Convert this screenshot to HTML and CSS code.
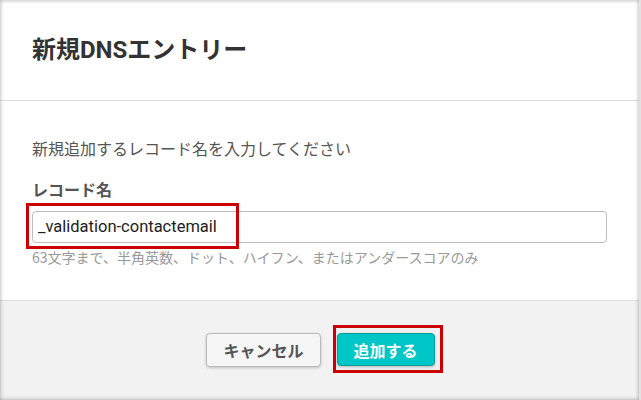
FILE: index.html
```html
<!DOCTYPE html>
<html lang="ja">
<head>
<meta charset="utf-8">
<link rel="stylesheet" href="styles.css">
</head>
<body>
<div class="modal">
  <header class="modal-header">
    <h1 class="modal-title">新規DNSエントリー</h1>
  </header>
  <section class="modal-body">
    <p class="intro">新規追加するレコード名を入力してください</p>
    <label class="field-label">レコード名</label>
    <div class="field">
      <div class="input">_validation-contactemail</div>
      <span class="mark mark-input"></span>
    </div>
    <p class="help">63文字まで、半角英数、ドット、ハイフン、またはアンダースコアのみ</p>
  </section>
  <footer class="modal-footer">
    <button class="btn btn-cancel">キャンセル</button>
    <span class="btn-wrap">
      <button class="btn btn-primary">追加する</button>
      <span class="mark mark-btn"></span>
    </span>
  </footer>
</div>
</body>
</html>
```

FILE: styles.css
```css
* { box-sizing: border-box; }
html, body {
  margin: 0;
  padding: 0;
  background: #fff;
}
body {
  font-family: "Noto Sans CJK JP", "Noto Sans", sans-serif;
  width: 641px;
  height: 400px;
  overflow: hidden;
}
.modal {
  position: relative;
  width: 641px;
  height: 400px;
  display: flex;
  flex-direction: column;
  background: #fff;
}
.modal::after {
  content: "";
  position: absolute;
  inset: 0;
  pointer-events: none;
  box-shadow: inset 0 0 4px rgba(0, 0, 0, 0.35);
  border-right: 2px solid #e2e2e2;
}
.modal-header {
  height: 101px;
  border-bottom: 1px solid #dedede;
  display: flex;
  align-items: center;
  padding: 0 32px;
}
.modal-title {
  margin: 0;
  font-family: Roboto, "Noto Sans CJK JP", sans-serif;
  font-size: 24px;
  font-weight: 700;
  color: #333;
  line-height: 32px;
}
.modal-body {
  flex: 1;
  padding: 35px 34px 0 32px;
}
.intro {
  margin: 0;
  font-size: 16px;
  line-height: 24px;
  color: #555;
}
.field-label {
  display: block;
  margin-top: 17px;
  font-size: 16px;
  line-height: 24px;
  font-weight: 700;
  color: #555;
}
.field {
  position: relative;
  margin-top: 10px;
}
.input {
  height: 32px;
  border: 1px solid #bdbdbd;
  border-radius: 4px;
  padding: 0 5px;
  font-family: Roboto, "Noto Sans CJK JP", sans-serif;
  font-size: 16.5px;
  line-height: 30px;
  color: #222;
  background: #fff;
}
.mark {
  position: absolute;
  border: 3px solid #cc0000;
  pointer-events: none;
}
.mark-input {
  left: -6px;
  top: -8px;
  width: 213px;
  height: 46px;
}
.help {
  margin: 5px 0 0;
  font-size: 14px;
  line-height: 18px;
  color: #999;
}
.modal-footer {
  height: 100px;
  background: #f2f2f2;
  border-top: 1px solid #dedede;
  display: flex;
  align-items: center;
  justify-content: center;
  gap: 16px;
  padding-bottom: 2px;
}
.btn {
  font-family: inherit;
  font-size: 16px;
  font-weight: 700;
  height: 34px;
  line-height: 32px;
  border-radius: 4px;
  white-space: nowrap;
  cursor: pointer;
}
.btn-cancel {
  padding: 0 16px;
  background: #f6f6f6;
  color: #555;
  border: 1px solid #bbb;
  box-shadow: 0 1px 3px rgba(0, 0, 0, 0.2);
}
.btn-wrap {
  position: relative;
  display: inline-flex;
}
.btn-primary {
  padding: 0 16px;
  height: 33px;
  background: #00c7c7;
  color: #fff;
  border: 1px solid #0a9b9b;
  box-shadow: 0 1px 3px rgba(0, 0, 0, 0.25);
}
.mark-btn {
  left: -4px;
  right: -8px;
  top: -8px;
  bottom: -7px;
}
```
